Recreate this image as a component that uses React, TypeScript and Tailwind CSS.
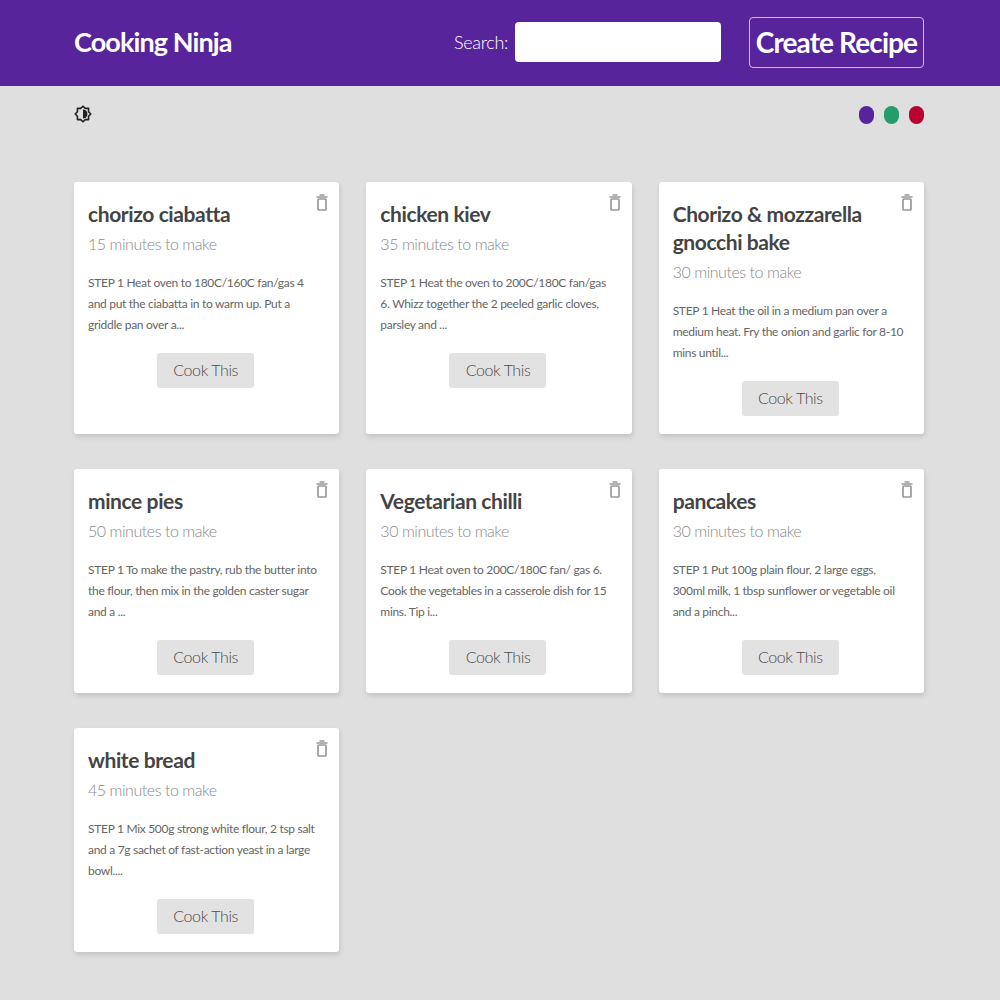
const recipes = [
  { title: "chorizo ciabatta", time: "15 minutes to make", body: "STEP 1 Heat oven to 180C/160C fan/gas 4 and put the ciabatta in to warm up. Put a griddle pan over a..." },
  { title: "chicken kiev", time: "35 minutes to make", body: "STEP 1 Heat the oven to 200C/180C fan/gas 6. Whizz together the 2 peeled garlic cloves, parsley and ..." },
  { title: "Chorizo & mozzarella gnocchi bake", time: "30 minutes to make", body: "STEP 1 Heat the oil in a medium pan over a medium heat. Fry the onion and garlic for 8-10 mins until..." },
  { title: "mince pies", time: "50 minutes to make", body: "STEP 1 To make the pastry, rub the butter into the flour, then mix in the golden caster sugar and a ..." },
  { title: "Vegetarian chilli", time: "30 minutes to make", body: "STEP 1 Heat oven to 200C/180C fan/ gas 6. Cook the vegetables in a casserole dish for 15 mins. Tip i..." },
  { title: "pancakes", time: "30 minutes to make", body: "STEP 1 Put 100g plain flour, 2 large eggs, 300ml milk, 1 tbsp sunflower or vegetable oil and a pinch..." },
  { title: "white bread", time: "45 minutes to make", body: "STEP 1 Mix 500g strong white flour, 2 tsp salt and a 7g sachet of fast-action yeast in a large bowl...." },
];

function Trash() {
  return (
    <svg width="12" height="17" viewBox="0 0 12 17" fill="none" className="absolute top-[12px] right-[11px]">
      <path d="M3.5 1h5M0.5 3h11" stroke="#999" strokeWidth="1.5" />
      <rect x="2" y="5" width="8" height="11" rx="0.8" stroke="#999" strokeWidth="1.7" />
    </svg>
  );
}

function Brightness() {
  return (
    <svg width="18" height="20" viewBox="1 1 22 22" fill="none" className="mb-[2px]">
      <path
        d="M12 2.5l2.8 2.7h4v4l2.7 2.8-2.7 2.8v4h-4L12 21.5l-2.8-2.7h-4v-4L2.5 12l2.7-2.8v-4h4z"
        stroke="#222"
        strokeWidth="2"
        strokeLinejoin="round"
      />
      <path d="M12 6.5a5.5 5.5 0 0 1 0 11z" fill="#222" />
    </svg>
  );
}

function Card({ title, time, body }: { title: string; time: string; body: string }) {
  return (
    <div className="relative bg-white rounded-[3px] shadow-[1px_3px_5px_rgba(0,0,0,0.12)] px-[14px] pt-[18px] pb-[18px]">
      <Trash />
      <h3 className="text-[21px] leading-[28px] font-bold text-[#444] tracking-[-0.4px] pr-[24px]">{title}</h3>
      <p className="text-[16px] leading-[20px] mt-[6px] text-[#8a8a8a] font-light tracking-[-0.45px]">{time}</p>
      <p className="text-[12px] leading-[21px] mt-[18px] text-[#666] tracking-[-0.3px] pr-[2px]">{body}</p>
      <div className="flex justify-center mt-[18px] pr-[2px]">
        <button className="w-[97px] h-[35px] pb-[1px] rounded-[3px] bg-[#e2e2e2] text-[#4a4a4a] text-[16px] font-light tracking-[-0.4px]">Cook This</button>
      </div>
    </div>
  );
}

export default function App() {
  return (
    <div className="min-h-[1000px] bg-[#dfdfdf] font-['Lato','Liberation_Sans',sans-serif]">
      <header className="h-[86px] bg-[#58249c] text-white">
        <div className="w-[850px] h-full ml-[74px] pb-[2px] flex items-center">
          <div className="text-[27px] font-bold tracking-[-0.9px]">Cooking Ninja</div>
          <div className="ml-auto flex items-center">
            <label className="text-[18px] font-light mr-[7px] tracking-[-0.3px]">Search:</label>
            <input className="w-[206px] h-[40px] bg-white rounded-[4px] mr-[28px]" />
            <button className="w-[175px] h-[51px] pb-[1px] border border-[#cdbde3] rounded-[4px] text-[28px] font-bold tracking-[-0.9px]">Create Recipe</button>
          </div>
        </div>
      </header>
      <main className="w-[850px] ml-[74px]">
        <div className="flex items-center justify-between h-[20px] mt-[19px]">
          <Brightness />
          <div className="flex gap-[10px]">
            <span className="w-[15px] h-[18px] rounded-full bg-[#58249c]" />
            <span className="w-[15px] h-[18px] rounded-full bg-[#249c6b]" />
            <span className="w-[15px] h-[18px] rounded-full bg-[#b70233]" />
          </div>
        </div>
        <div className="grid grid-cols-3 gap-x-[27px] gap-y-[35px] mt-[57px]">
          {recipes.map((r) => (
            <Card key={r.title} {...r} />
          ))}
        </div>
      </main>
    </div>
  );
}
